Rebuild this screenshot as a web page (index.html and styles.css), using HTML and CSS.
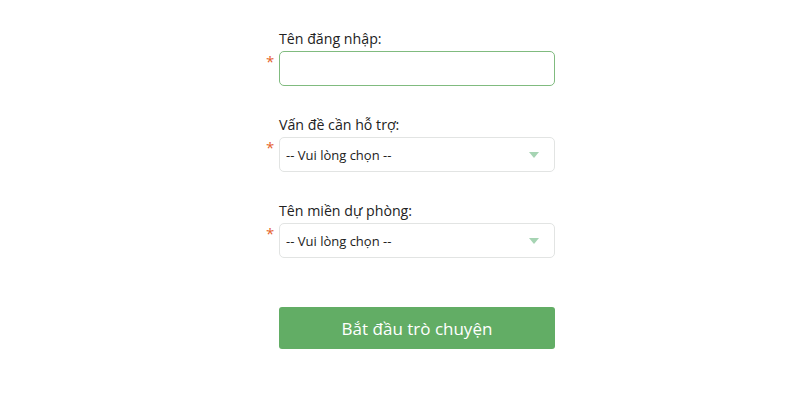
FILE: index.html
```html
<!DOCTYPE html>
<html lang="vi">
<head>
  <meta charset="UTF-8">
  <meta name="viewport" content="width=device-width, initial-scale=1.0">
  <title>Hỗ trợ trực tuyến</title>
  <link rel="stylesheet" href="styles.css">
</head>
<body>
  <form class="chat-form">
    <div class="field">
      <label class="field-label" for="username">Tên đăng nhập:</label>
      <span class="required">*</span>
      <input class="field-input focused" type="text" id="username">
    </div>

    <div class="field">
      <label class="field-label" for="issue">Vấn đề cần hỗ trợ:</label>
      <span class="required">*</span>
      <div class="select-box">
        <select class="field-input" id="issue">
          <option>-- Vui lòng chọn --</option>
        </select>
        <span class="caret"></span>
      </div>
    </div>

    <div class="field">
      <label class="field-label" for="domain">Tên miền dự phòng:</label>
      <span class="required">*</span>
      <div class="select-box">
        <select class="field-input" id="domain">
          <option>-- Vui lòng chọn --</option>
        </select>
        <span class="caret"></span>
      </div>
    </div>

    <div class="actions">
      <button type="button" class="start-btn">Bắt đầu trò chuyện</button>
    </div>
  </form>
</body>
</html>
```

FILE: styles.css
```css
body {
  margin: 0;
  background: #fff;
  font-family: 'Open Sans', 'Noto Sans', sans-serif;
  color: #222;
}

.chat-form {
  padding: 29px 0 0 259px;
  width: 296px;
}

.field {
  display: grid;
  grid-template-columns: 20px 276px;
  row-gap: 2px;
  margin-bottom: 29px;
}

.field-label {
  grid-column: 2;
  font-size: 14.2px;
  line-height: 20px;
  color: #222;
}

.required {
  grid-column: 1;
  align-self: start;
  color: #e5622c;
  font-size: 15px;
  line-height: 15px;
  padding-left: 7px;
  padding-top: 3px;
}

.field-input {
  grid-column: 2;
  box-sizing: border-box;
  width: 276px;
  height: 35px;
  margin: 0;
  padding: 0 7px;
  border: 1px solid #e2e4e3;
  border-radius: 5px;
  background: #fff;
  font-family: inherit;
  font-size: 13px;
  color: #222;
  outline: none;
}

.field-input.focused {
  border-color: #80bb7f;
}

.select-box {
  grid-column: 2;
  position: relative;
}

select.field-input {
  appearance: none;
  -webkit-appearance: none;
  padding-left: 6px;
}

.caret {
  position: absolute;
  right: 16px;
  top: 15px;
  width: 0;
  height: 0;
  border-left: 5px solid transparent;
  border-right: 5px solid transparent;
  border-top: 6px solid #a6d4b3;
  pointer-events: none;
}

.actions {
  padding: 20px 0 0 20px;
}

.start-btn {
  width: 276px;
  height: 42px;
  border: none;
  border-radius: 3px;
  background: #62ad65;
  color: #fff;
  font-family: inherit;
  font-size: 17px;
  cursor: pointer;
}
```
